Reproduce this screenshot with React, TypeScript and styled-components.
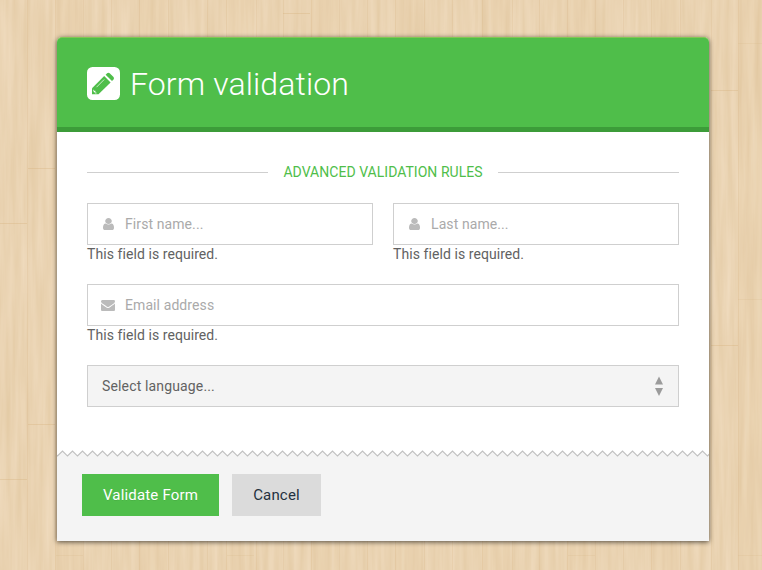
import React from "react";
import styled, { createGlobalStyle } from "styled-components";

const GlobalStyle = createGlobalStyle`
  *, *::before, *::after { box-sizing: border-box; }
  html, body { margin: 0; height: 100%; overflow: hidden; }
  body { background: #ead3b2; font-family: Roboto, "Liberation Sans", sans-serif; color: #626262; }
`;

const Page = styled.div`
  position: relative;
  height: 570px;
  padding: 37px 53px 29px 57px;
`;

const WoodSurface = styled.svg`
  position: absolute;
  inset: 0;
  width: 100%;
  height: 100%;
`;

const Card = styled.form`
  position: relative;
  display: flex;
  flex-direction: column;
  width: 652px;
  height: 504px;
  background: #fff;
  border-radius: 5px 5px 0 0;
  box-shadow: 0 1px 5px rgba(0, 0, 0, 0.65);
`;

const Header = styled.header`
  display: flex;
  align-items: center;
  gap: 10px;
  height: 95px;
  padding: 0 30px;
  background: #4fbe4a;
  border-top: 1px solid #83c653;
  border-bottom: 5px solid #3c9c39;
  border-radius: 5px 5px 0 0;
`;

const HeaderIcon = styled.svg`
  width: 33px;
  height: 33px;
  margin-top: 1px;
`;

const Title = styled.h1`
  margin: 3px 0 0;
  font-size: 32px;
  line-height: 40px;
  font-weight: 300;
  letter-spacing: 0.12px;
  color: #fff;
`;

const Body = styled.div`
  display: flex;
  flex-direction: column;
  flex: 1;
  padding: 30px 30px 0;
  letter-spacing: 0.07px;
`;

const SectionTitle = styled.div`
  display: flex;
  align-items: center;
  gap: 15px;
  height: 20px;
  margin-bottom: 21px;
  font-size: 14px;
  letter-spacing: 0.03px;
  color: #4fbe4a;
  white-space: nowrap;

  &::before, &::after {
    content: "";
    flex: 1;
    height: 1px;
    margin-top: 1px;
    background: #cfcfcf;
  }
`;

const FieldRow = styled.div`
  display: flex;
  gap: 20px;
  height: 81px;
`;

const Field = styled.div`
  flex: 1;
`;

const InputBox = styled.label`
  display: flex;
  align-items: center;
  height: 42px;
  padding-left: 13px;
  border: 1px solid #cfcfcf;
  background: #fff;
`;

const IconSlot = styled.span`
  display: flex;
  justify-content: center;
  width: 14px;
  margin-right: 10px;
  color: #bbb;
`;

const Input = styled.input`
  flex: 1;
  min-width: 0;
  height: 40px;
  padding: 0;
  border: 0;
  outline: 0;
  background: transparent;
  font: 14px Roboto, "Liberation Sans", sans-serif;
  letter-spacing: 0.09px;
  color: #626262;

  &::placeholder { color: #aaa; opacity: 1; }
`;

const ErrorText = styled.div`
  font-size: 14px;
  line-height: 18px;
`;

const SelectBox = styled.div`
  display: flex;
  align-items: center;
  justify-content: space-between;
  height: 42px;
  padding: 0 14px;
  border: 1px solid #cfcfcf;
  background: #f4f4f4;
  font-size: 14px;
  letter-spacing: 0.15px;
`;

const Footer = styled.footer`
  height: 91px;
  background: #f4f4f4;
`;

const ZigZag = styled.svg`
  display: block;
  width: 652px;
  height: 8px;
`;

const Actions = styled.div`
  display: flex;
  gap: 13px;
  padding: 16px 25px 0;
`;

const Button = styled.button<{ $primary?: boolean }>`
  height: 42px;
  width: ${(p) => (p.$primary ? "137px" : "89px")};
  padding: 0;
  border: 0;
  background: ${(p) => (p.$primary ? "#4fbe4a" : "#dbdbdb")};
  color: ${(p) => (p.$primary ? "#fff" : "#243140")};
  text-shadow: ${(p) => (p.$primary ? "0 1px rgba(0, 0, 0, 0.08)" : "none")};
  font: 15px Roboto, "Liberation Sans", sans-serif;
  letter-spacing: 0.17px;
`;

const UserIcon = () => (
  <svg width="11" height="14" viewBox="0 0 1280 1792" preserveAspectRatio="none" fill="currentColor">
    <path d="M1280 1399q0 109-62.5 187t-150.5 78h-854q-88 0-150.5-78t-62.5-187q0-85 8.500-160.500t31.500-152 58.500-131 94-89 134.500-34.500q131 128 313 128t313-128q76 0 134.500 34.500t94 89 58.500 131 31.500 152 8.500 160.500zm-256-887q0 159-112.500 271.500t-271.500 112.500-271.500-112.500-112.500-271.500 112.500-271.500 271.500-112.500 271.500 112.500 112.500 271.500z" />
  </svg>
);

const EnvelopeIcon = () => (
  <svg width="14" height="14" viewBox="0 0 1792 1792" fill="currentColor">
    <path d="M1792 710v794q0 66-47 113t-113 47h-1472q-66 0-113-47t-47-113v-794q44 49 101 87 362 246 497 345 57 42 92.500 65.500t94.500 48 110 24.500h2q51 0 110-24.500t94.500-48 92.500-65.500q170-123 498-345 57-39 100-87zm0-294q0 79-49 151t-122 123q-376 261-468 325-10 7-42.500 31t-54 38.500-52 32.500-57.500 27-50 9h-2q-23 0-50-9t-57.500-27-52-32.500-54-38.500-42.500-31q-91-64-262-182.500t-205-142.500q-62-42-117-115.500t-55-136.500q0-78 41.500-130t118.500-52h1472q65 0 112.500 47t47.500 113z" />
  </svg>
);

const seams = [27, 55, 83, 111, 139, 168, 207, 226, 256, 283, 311, 339, 367, 395, 424, 452, 482, 512, 539, 567, 595, 623, 651, 680, 711, 738];

// Ends of single boards within a plank column.
const joints = [
  { x: 0, y: 223 },
  { x: 0, y: 479 },
  { x: 28, y: 168 },
  { x: 28, y: 424 },
  { x: 56, y: 555 },
  { x: 227, y: 555 },
  { x: 283, y: 13 },
  { x: 568, y: 555 },
  { x: 711, y: 90 },
  { x: 711, y: 345 },
  { x: 738, y: 43 },
  { x: 738, y: 299 },
  { x: 738, y: 555 },
];

const Wood = () => (
  <WoodSurface viewBox="0 0 762 570" preserveAspectRatio="none" aria-hidden="true">
    <defs>
      <filter id="grain" x="0" y="0" width="100%" height="100%" colorInterpolationFilters="sRGB">
        <feTurbulence type="fractalNoise" baseFrequency="0.16 0.009" numOctaves="3" seed="8" />
        <feColorMatrix values="0.055 0 0 0 0.889  0.075 0 0 0 0.79  0.115 0 0 0 0.64  0 0 0 0 1" />
      </filter>
    </defs>
    <rect width="762" height="570" filter="url(#grain)" />
    <g fill="#d3ad78">
      {seams.map((x, i) => (
        <React.Fragment key={x}>
          {i % 3 === 1 && <rect x={x} width="28" height="570" opacity="0.05" />}
          <rect x={x} width="1" height="570" opacity="0.18" />
        </React.Fragment>
      ))}
      {joints.map((j) => (
        <rect key={`${j.x}-${j.y}`} x={j.x} y={j.y} width="27" height="1" opacity={j.x === 738 || j.y > 500 ? 0.15 : 0.32} />
      ))}
    </g>
  </WoodSurface>
);

const NameField = ({ label }: { label: string }) => (
  <Field>
    <InputBox>
      <IconSlot><UserIcon /></IconSlot>
      <Input placeholder={label} />
    </InputBox>
    <ErrorText>This field is required.</ErrorText>
  </Field>
);

export default function App() {
  return (
    <>
      <GlobalStyle />
      <Page>
        <Wood />
        <Card noValidate onSubmit={(e) => e.preventDefault()}>
          <Header>
            <HeaderIcon viewBox="0 0 33 33">
              <rect width="33" height="33" rx="5.5" fill="#fff" />
              <g fill="#4fbe4a">
                <path d="M5 27.2V21.2L17.2 9l6.4 6.4L11.5 27.2Z" />
                <path d="M18.6 7.7l1.500-1.500q1.300-1.100 2.600 0l3.800 3.700q1.100 1.300 0 2.600L25 14Z" />
              </g>
              <path d="M6.600 22.200v1.500h1.800v2h1.600l-1.100 1.100-3-3Z" fill="#fff" />
              <path d="M9.500 20.200l7.700-7.700" stroke="#fff" strokeWidth="0.7" />
            </HeaderIcon>
            <Title>Form validation</Title>
          </Header>
          <Body>
            <SectionTitle>ADVANCED VALIDATION RULES</SectionTitle>
            <FieldRow>
              <NameField label="First name..." />
              <NameField label="Last name..." />
            </FieldRow>
            <FieldRow>
              <Field>
                <InputBox>
                  <IconSlot><EnvelopeIcon /></IconSlot>
                  <Input placeholder="Email address" />
                </InputBox>
                <ErrorText>This field is required.</ErrorText>
              </Field>
            </FieldRow>
            <SelectBox>
              Select language...
              <svg width="10" height="20" viewBox="0 0 10 20" fill="#9b9b9b">
                <path d="M5 0.500L9 8.500H1ZM1 12h8l-4 8Z" />
              </svg>
            </SelectBox>
          </Body>
          <Footer>
            <ZigZag viewBox="0 0 652 8">
              <defs>
                <pattern id="teeth" width="10" height="8" patternUnits="userSpaceOnUse">
                  <path d="M0 0H10V5.500L5.500 1L0.500 6L0 5.500Z" fill="#fff" />
                  <path d="M-0.500 5L0.500 6L5.500 1L10.500 6" fill="none" stroke="#c0c0c0" strokeWidth="1.2" />
                </pattern>
              </defs>
              <rect width="652" height="8" fill="url(#teeth)" />
            </ZigZag>
            <Actions>
              <Button $primary type="submit">Validate Form</Button>
              <Button type="button">Cancel</Button>
            </Actions>
          </Footer>
        </Card>
      </Page>
    </>
  );
}
